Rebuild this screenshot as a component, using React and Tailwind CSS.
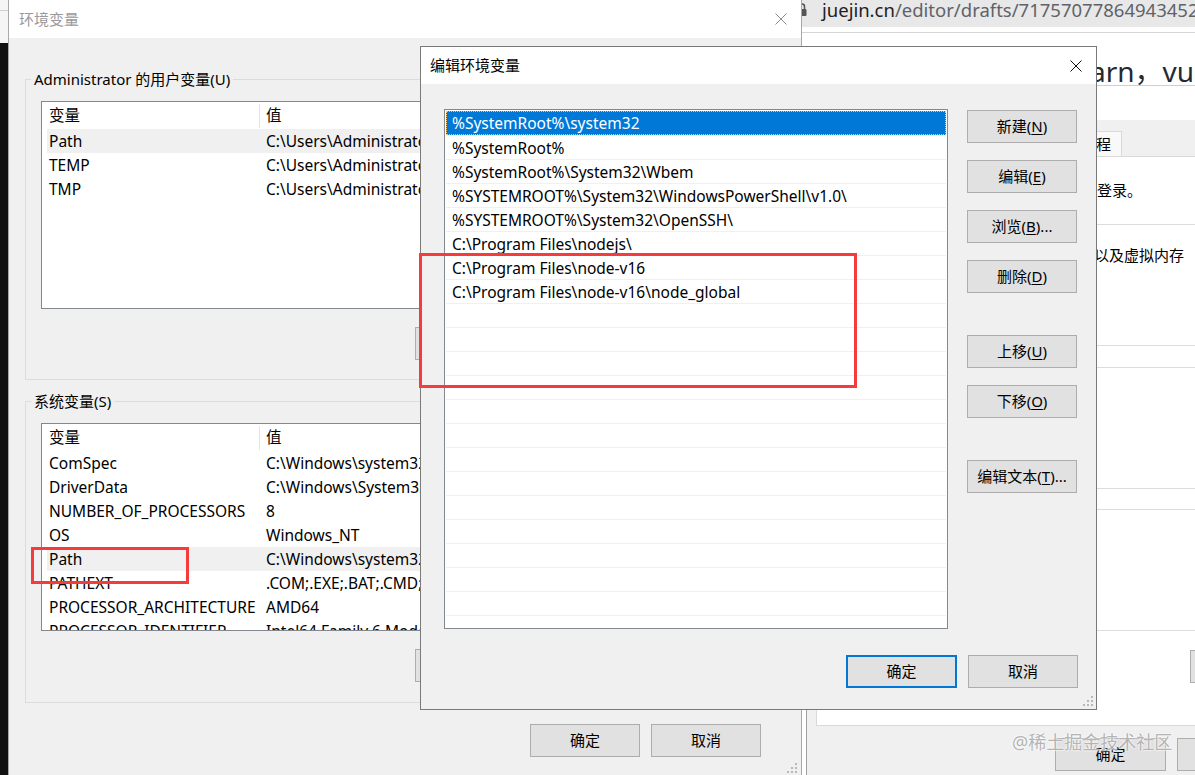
import React from 'react';

const USER_VARS = [
  ['Path', 'C:\\Users\\Administrator\\AppData\\Local\\Microsoft\\WindowsApps;'],
  ['TEMP', 'C:\\Users\\Administrator\\AppData\\Local\\Temp'],
  ['TMP', 'C:\\Users\\Administrator\\AppData\\Local\\Temp'],
];

const SYS_VARS = [
  ['ComSpec', 'C:\\Windows\\system32\\cmd.exe'],
  ['DriverData', 'C:\\Windows\\System32\\Drivers\\DriverData'],
  ['NUMBER_OF_PROCESSORS', '8'],
  ['OS', 'Windows_NT'],
  ['Path', 'C:\\Windows\\system32;C:\\Windows;C:\\Windows\\System32\\Wbem;'],
  ['PATHEXT', '.COM;.EXE;.BAT;.CMD;.VBS;.VBE;.JS;.JSE;.WSF;.WSH;.MSC'],
  ['PROCESSOR_ARCHITECTURE', 'AMD64'],
  ['PROCESSOR_IDENTIFIER', 'Intel64 Family 6 Model 142 Stepping 10, GenuineIntel'],
];

const PATHS = [
  '%SystemRoot%\\system32',
  '%SystemRoot%',
  '%SystemRoot%\\System32\\Wbem',
  '%SYSTEMROOT%\\System32\\WindowsPowerShell\\v1.0\\',
  '%SYSTEMROOT%\\System32\\OpenSSH\\',
  'C:\\Program Files\\nodejs\\',
  'C:\\Program Files\\node-v16',
  'C:\\Program Files\\node-v16\\node_global',
];

function XIcon({ color = '#000' }) {
  return (
    <svg width="12" height="12" viewBox="0 0 12 12">
      <path d="M0.5 0.5 L11.5 11.5 M11.5 0.5 L0.5 11.5" stroke={color} strokeWidth="1" />
    </svg>
  );
}

function Grip() {
  return (
    <svg width="12" height="12" viewBox="0 0 12 12" fill="#b8b8b8">
      <rect x="9" y="1" width="2" height="2" />
      <rect x="5" y="5" width="2" height="2" />
      <rect x="9" y="5" width="2" height="2" />
      <rect x="1" y="9" width="2" height="2" />
      <rect x="5" y="9" width="2" height="2" />
      <rect x="9" y="9" width="2" height="2" />
    </svg>
  );
}

function Btn({ children, wide = false, focused = false }) {
  return (
    <div
      className={`${wide ? 'w-[111px]' : 'w-[110px]'} h-[33px] shrink-0 flex items-center justify-center text-[15px] text-black bg-[#e1e1e1] ${
        focused ? 'border-2 border-[#0078d7]' : 'border border-[#adadad]'
      }`}
    >
      {children}
    </div>
  );
}

function Key({ k }) {
  return <span className="underline underline-offset-2">{k}</span>;
}

function VarList({ rows }) {
  return (
    <div className="h-[208px] border border-[#828790] bg-white overflow-hidden text-[15.5px] text-black">
      <div className="h-[27px] pt-[1px] flex items-center">
        <div className="w-[217px] pl-[7px] shrink-0">变量</div>
        <div className="w-px h-[24px] bg-[#e5e5e5]" />
        <div className="pl-[6px]">值</div>
      </div>
      {rows.map(([k, v]) => (
        <div
          key={k}
          className={`ml-[5px] h-[24px] pt-[1px] shrink-0 flex items-center whitespace-nowrap ${k === 'Path' ? 'bg-[#f0f0f0]' : ''}`}
        >
          <div className="w-[217px] pl-[2px] shrink-0">{k}</div>
          <div className="pl-[2px]">{v}</div>
        </div>
      ))}
    </div>
  );
}

function Group({ label, rows, keys, gapTop, padBottom }) {
  return (
    <fieldset className={`${gapTop} border border-[#dcdcdc]`}>
      <legend className="ml-[5px] px-[3px] leading-[20px] text-[15px] text-black">{label}</legend>
      <div className={`px-[15px] ${padBottom}`}>
        <div className="mt-[12px]">
          <VarList rows={rows} />
        </div>
        <div className="mt-[18px] flex justify-end gap-[12px]">
          <Btn>新建(<Key k={keys[0]} />)...</Btn>
          <Btn>编辑(<Key k={keys[1]} />)...</Btn>
          <Btn>删除(<Key k={keys[2]} />)</Btn>
        </div>
      </div>
    </fieldset>
  );
}

export default function App() {
  const pathRows = [...PATHS, ...Array(14).fill('')];

  return (
    <div className="relative w-[1195px] h-[775px] overflow-hidden bg-[#f0f0f0] font-['Noto_Sans','Noto_Sans_CJK_SC',sans-serif]">
      {/* left desktop edge */}
      <div className="absolute left-0 top-0 w-[8px] h-[775px] flex flex-col">
        <div className="h-[10px] bg-[#f5f5f5]" />
        <div className="h-px bg-[#cfcfcf]" />
        <div className="h-[32px] bg-[#f5f5f5]" />
        <div className="flex-1 bg-[#111]" />
      </div>

      {/* browser + system properties behind */}
      <div className="absolute left-[802px] top-0 w-[393px] h-[775px] flex flex-col bg-white">
        <div className="h-[27px] shrink-0 bg-[#e8e8e8] flex items-start">
          <svg className="-ml-[5px] mt-[2px] shrink-0" width="10" height="15" viewBox="0 0 10 15">
            <path d="M2.5 7 V4.5 a2.5 2.5 0 0 1 5 0 V7" stroke="#555" strokeWidth="1.6" fill="none" />
            <rect x="0.5" y="7" width="9" height="7" rx="1" fill="#555" />
          </svg>
          <span className="ml-[15px] text-[18.5px] leading-[20px] whitespace-nowrap text-[#202124]">
            juejin.cn<span className="text-[#5f6368]">/editor/drafts/7175707786494345275</span>
          </span>
        </div>
        <div className="h-[5px] shrink-0" />
        <div className="h-[88px] shrink-0 border-t border-[#d6d6d6]">
          <div className="mt-[24px] h-[29px] border-b border-[#cfcfcf] pl-[288px] text-[28px] leading-[28px] text-[#252933] whitespace-nowrap">
            arn，vue
          </div>
        </div>
        <div className="flex-1 ml-[4px] border-l border-[#a0a0a0] pl-[9px] bg-[#f0f0f0] flex flex-col">
          <div className="h-[37px] shrink-0 border-b border-[#d9d9d9] flex items-end">
            <div className="ml-[251px] w-[55px] h-[25px] bg-[#f9f9f9] border border-b-0 border-[#d9d9d9] flex items-center justify-end pr-[10px] text-[15px] text-black whitespace-nowrap">
              远程
            </div>
          </div>
          <div className="h-[569px] shrink-0 bg-white border-l border-b border-[#d9d9d9] flex flex-col text-[15px] text-black">
            <div className="mt-[23px] h-[20px] leading-[20px] pl-[280px] whitespace-nowrap">登录。</div>
            <div className="mt-[24px] h-px bg-[#dcdcdc]" />
            <div className="mt-[20px] h-[20px] leading-[20px] pl-[277px] whitespace-nowrap">以及虚拟内存</div>
            <div className="mt-[80px] h-px bg-[#dcdcdc]" />
            <div className="mt-[21px] h-px bg-[#dcdcdc]" />
            <div className="mt-[120px] h-px bg-[#dcdcdc]" />
            <div className="mt-[20px] h-px bg-[#dcdcdc]" />
            <div className="mt-[120px] h-px bg-[#dcdcdc]" />
            <div className="mt-[19px] pl-[373px]">
              <Btn>设置(N)...</Btn>
            </div>
          </div>
          <div className="mt-[12px] pl-[239px] flex gap-[11px]">
            <Btn wide>确定</Btn>
            <Btn>取消</Btn>
          </div>
        </div>
      </div>

      {/* 环境变量 window */}
      <div className="absolute left-[8px] top-0 w-[794px] h-[775px] flex flex-col border-x border-[#a8a8a8] bg-[#f0f0f0]">
        <div className="h-[38px] shrink-0 bg-white flex items-center justify-between pl-[10px] pr-[14px]">
          <span className="text-[15px] text-[#9a9a9a]">环境变量</span>
          <XIcon color="#8c8c8c" />
        </div>
        <div className="flex-1 px-[16px] flex flex-col">
          <Group
            label="Administrator 的用户变量(U)"
            rows={USER_VARS}
            keys={['N', 'E', 'D']}
            gapTop="mt-[31px]"
            padBottom="pb-[19px]"
          />
          <Group
            label="系统变量(S)"
            rows={SYS_VARS}
            keys={['W', 'I', 'L']}
            gapTop="mt-[11px]"
            padBottom="pb-[20px]"
          />
          <div className="mt-[21px] pr-[24px] flex justify-end gap-[11px]">
            <Btn>确定</Btn>
            <Btn>取消</Btn>
          </div>
        </div>
        <div className="absolute right-[3px] bottom-[1px]">
          <Grip />
        </div>
      </div>

      {/* 编辑环境变量 window */}
      <div className="absolute left-[420px] top-[46px] w-[677px] h-[664px] flex flex-col border border-[#7a7a7a] bg-[#f0f0f0]">
        <div className="h-[37px] shrink-0 bg-white flex items-center justify-between pl-[9px] pr-[14px]">
          <span className="text-[15px] text-black">编辑环境变量</span>
          <XIcon color="#111" />
        </div>
        <div className="pl-[23px] pt-[25px] flex">
          <div className="w-[504px] h-[520px] shrink-0 border border-[#828790] bg-white p-[1px] overflow-hidden text-[15.5px]">
            {pathRows.map((p, i) => (
              <div
                key={i}
                className={`h-[24px] pt-[2px] shrink-0 flex items-center pl-[6px] whitespace-nowrap ${
                  i === 0
                    ? 'bg-[#0078d7] text-white outline-1 outline-dotted outline-[#f3c47c] -outline-offset-1'
                    : 'border-t border-[#f0f0f0] text-black'
                }`}
              >
                {p}
              </div>
            ))}
          </div>
          <div className="ml-[19px] flex flex-col">
            <div className="mt-[1px]">
              <Btn>新建(<Key k="N" />)</Btn>
            </div>
            <div className="mt-[17px]">
              <Btn>编辑(<Key k="E" />)</Btn>
            </div>
            <div className="mt-[17px]">
              <Btn>浏览(<Key k="B" />)...</Btn>
            </div>
            <div className="mt-[17px]">
              <Btn>删除(<Key k="D" />)</Btn>
            </div>
            <div className="mt-[42px]">
              <Btn>上移(<Key k="U" />)</Btn>
            </div>
            <div className="mt-[17px]">
              <Btn>下移(<Key k="O" />)</Btn>
            </div>
            <div className="mt-[42px]">
              <Btn>编辑文本(<Key k="T" />)...</Btn>
            </div>
          </div>
        </div>
        <div className="mt-[26px] pr-[18px] flex justify-end gap-[11px]">
          <Btn wide focused>确定</Btn>
          <Btn>取消</Btn>
        </div>
        <div className="absolute right-[2px] bottom-[2px]">
          <Grip />
        </div>
      </div>

      {/* red annotation boxes */}
      <div className="absolute left-[31px] top-[547px] w-[158px] h-[37px] border-[3px] border-[#f53b3b]" />
      <div className="absolute left-[419px] top-[253px] w-[438px] h-[135px] border-[3px] border-[#f53b3b]" />

      {/* watermark */}
      <div className="absolute left-[1012px] top-[730px] text-[18px] leading-[24px] text-[#b4b4b4] whitespace-nowrap [text-shadow:0_0_2px_#fff,0_0_2px_#fff]">
        @稀土掘金技术社区
      </div>
    </div>
  );
}
